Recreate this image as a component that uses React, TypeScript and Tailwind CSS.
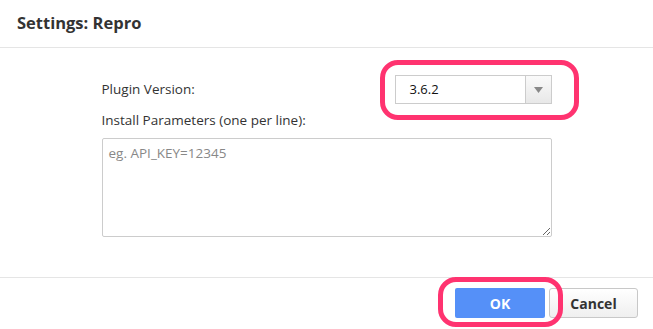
import React from 'react';

const Ring = ({ className }: { className: string }) => (
  <div
    className={`pointer-events-none absolute rounded-[18px] border-[5px] border-[#ff3370] ${className}`}
  />
);

const App = () => {
  return (
    <div
      className="flex h-[329px] w-[653px] flex-col bg-white text-[#333]"
      style={{ fontFamily: '"Open Sans", "Liberation Sans", sans-serif' }}
    >
      <div className="flex h-[48px] items-center border-b border-[#e5e5e5] px-[17px]">
        <h2 className="text-[16.5px] font-bold text-[#333]">Settings: Repro</h2>
      </div>

      <div className="flex flex-1 justify-center pt-[27px]">
        <div className="flex w-[450px] flex-col">
          <div className="flex h-[29px] items-center justify-between">
            <label className="text-[13.5px]">Plugin Version:</label>
            <div className="relative">
              <div className="flex h-[29px] w-[157px] items-center border border-[#ccc] bg-white">
                <span className="flex-1 pl-[14px] text-[13px] text-[#111]">3.6.2</span>
                <div className="flex h-full w-[26px] items-center justify-center border-l border-[#ccc] bg-gradient-to-b from-[#fafafa] to-[#e8e8e8]">
                  <svg width="9" height="6" viewBox="0 0 9 6">
                    <path d="M0 0 L9 0 L4.5 6 Z" fill="#888" />
                  </svg>
                </div>
              </div>
              <Ring className="-top-[15px] -left-[15px] -right-[27px] -bottom-[16px]" />
            </div>
          </div>

          <label className="mt-[7px] text-[13.5px] leading-[18px]">
            Install Parameters (one per line):
          </label>

          <textarea
            className="mt-[9px] h-[99px] w-[450px] resize rounded-[2px] border border-[#ccc] px-[6px] py-[4px] text-[13.5px] text-[#333] outline-none placeholder:text-[#888]"
            placeholder="eg. API_KEY=12345"
          />
        </div>
      </div>

      <div className="flex h-[52px] items-start justify-end gap-[4px] border-t border-[#e5e5e5] pr-[15px] pt-[10px]">
        <div className="relative">
          <button className="h-[30px] w-[90px] rounded-[2px] bg-[#5590f8] text-[14px] font-bold text-white">
            OK
          </button>
          <Ring className="-top-[11px] -left-[17px] -right-[18px] -bottom-[9px]" />
        </div>
        <button className="h-[30px] w-[89px] rounded-[3px] border border-[#c8c8c8] bg-gradient-to-b from-white to-[#efefef] text-[14px] font-bold text-[#333]">
          Cancel
        </button>
      </div>
    </div>
  );
};

export default App;
